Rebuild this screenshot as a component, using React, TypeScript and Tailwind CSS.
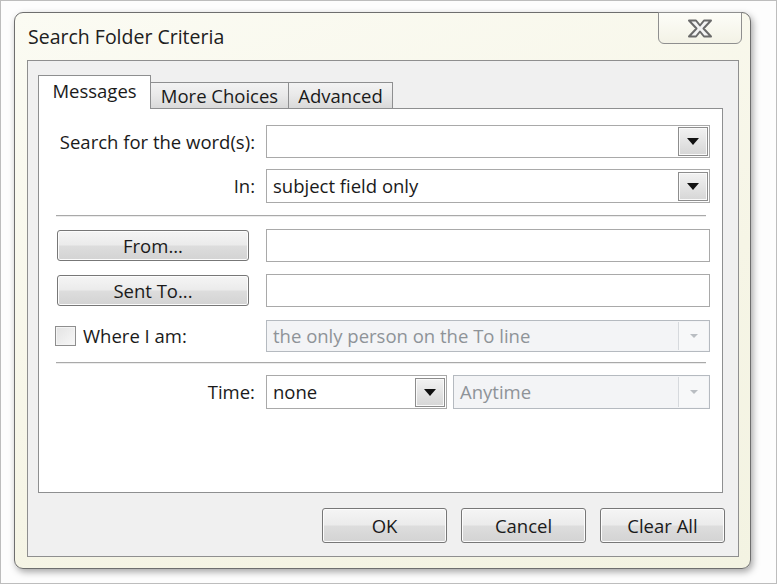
import React from "react";

const btn =
  "flex items-center justify-center rounded-[3px] border border-[#777777] bg-[linear-gradient(#f5f5f5,#ebebeb_48%,#dddddd_52%,#d3d3d3)] shadow-[inset_0_0_0_1px_#fcfcfc] text-[#1a1a1a]";

function DropButton() {
  return (
    <div className="flex h-[29px] w-[30px] items-center justify-center border border-[#8d8d8d] bg-[linear-gradient(#f2f2f2,#e4e4e4_50%,#d6d6d6)] shadow-[inset_0_0_0_1px_#fafafa]">
      <svg width="12" height="7" viewBox="0 0 12 7">
        <polygon points="0,0 12,0 6,7" fill="#111" />
      </svg>
    </div>
  );
}

function Combo({ text, className }: { text: string; className: string }) {
  return (
    <div
      className={`flex items-center border border-[#a9a9a9] bg-white pl-[6px] pr-[1px] ${className}`}
    >
      <span className="flex-1 text-[#1a1a1a]">{text}</span>
      <DropButton />
    </div>
  );
}

function DisabledCombo({ text, className }: { text: string; className: string }) {
  return (
    <div
      className={`flex items-stretch border border-[#b5bac0] bg-[#f3f4f6] ${className}`}
    >
      <span className="flex flex-1 items-center pl-[6px] text-[#8e9398]">{text}</span>
      <div className="my-[1px] mr-[1px] flex w-[30px] items-center justify-center border-l border-[#d6d9dd] bg-[#f7f8f9]">
        <svg width="10" height="6" viewBox="0 0 10 6">
          <polygon points="1,1 9,1 5,5" fill="#b9bdc2" />
        </svg>
      </div>
    </div>
  );
}

function Separator() {
  return <div className="h-[2px] w-[650px] border-t border-b border-t-[#a9a9a9] border-b-[#ececec]" />;
}

export default function App() {
  return (
    <div className="h-[584px] w-[777px] overflow-hidden border border-[#bdbdbd] bg-[#fdfdfd] pl-[13px] pt-[11px] font-['Open_Sans',sans-serif] text-[18.5px] font-medium">
      <div className="relative flex h-[557px] w-[737px] flex-col rounded-[9px] border border-[#6e6e6e] bg-[linear-gradient(160deg,#fbfbf3,#f6f5e6_60%,#f3f3e2)] shadow-[2px_3px_7px_rgba(0,0,0,0.35)]">
        {/* title bar */}
        <div className="flex h-[47px] items-center pl-[13px] text-[19.5px] font-normal text-[#202020]">
          Search Folder Criteria
        </div>
        <div className="absolute right-[8px] top-[-1px] flex h-[32px] w-[84px] items-center justify-center rounded-b-[6px] border border-[#8f8f8f] bg-[linear-gradient(#fdfdf8,#f3f2e6)]">
          <svg width="26" height="19" viewBox="0 0 26 19">
            <polygon
              points="2,1.5 9,1.5 13,6.5 17,1.5 24,1.5 16.5,9.5 24,17.5 17,17.5 13,12.5 9,17.5 2,17.5 9.5,9.5"
              fill="#f4f4f4"
              stroke="#6a6a6a"
              strokeWidth="2"
              strokeLinejoin="round"
            />
          </svg>
        </div>

        {/* client area */}
        <div className="ml-[12px] flex h-[497px] w-[712px] flex-col border border-[#8f8f8f] bg-[#f0f0f0] pl-[10px] pt-[14px]">
          {/* tabs */}
          <div className="flex h-[33px] items-end">
            <div className="relative z-10 -mb-px flex h-[34px] w-[113px] items-center justify-center border-x border-t border-[#8e8f90] bg-white pb-[4px] text-[#1a1a1a]">
              Messages
            </div>
            <div className="flex h-[26px] w-[138px] items-center justify-center border-r border-t border-[#8e8f90] bg-[linear-gradient(#f3f3f3,#e9e9e9_50%,#d9d9d9)] text-[#1a1a1a]">
              More Choices
            </div>
            <div className="flex h-[26px] w-[104px] items-center justify-center border-r border-t border-[#8e8f90] bg-[linear-gradient(#f3f3f3,#e9e9e9_50%,#d9d9d9)] text-[#1a1a1a]">
              Advanced
            </div>
          </div>

          {/* tab panel */}
          <div className="flex h-[385px] w-[685px] flex-col border border-[#8e8f90] bg-white pl-[17px] pt-[16px] text-[#1a1a1a]">
            <div className="flex h-[33px] items-center">
              <div className="w-[199px] text-right">Search for the word(s):</div>
              <Combo text="" className="ml-[11px] h-[33px] w-[444px]" />
            </div>
            <div className="mt-[11px] flex h-[34px] items-center">
              <div className="w-[199px] text-right">In:</div>
              <Combo text="subject field only" className="ml-[11px] h-[34px] w-[444px]" />
            </div>

            <div className="mt-[12px]">
              <Separator />
            </div>

            <div className="mt-[12px] flex h-[33px] items-center">
              <div className="w-[199px] pl-px">
                <div className={`${btn} h-[31px] w-[192px]`}>From...</div>
              </div>
              <div className="ml-[11px] h-[33px] w-[444px] border border-[#a9a9a9] bg-white" />
            </div>
            <div className="mt-[12px] flex h-[33px] items-center">
              <div className="w-[199px] pl-px">
                <div className={`${btn} h-[31px] w-[192px]`}>Sent To...</div>
              </div>
              <div className="ml-[11px] h-[33px] w-[444px] border border-[#a9a9a9] bg-white" />
            </div>
            <div className="mt-[13px] flex h-[32px] items-center">
              <div className="flex w-[199px] items-center">
                <div className="-ml-px h-[20px] w-[21px] border border-[#8e8e8e] bg-[linear-gradient(135deg,#e3e3e3,#f7f7f7)] shadow-[inset_0_0_0_1px_#f4f4f4]" />
                <span className="ml-[7px]">Where I am:</span>
              </div>
              <DisabledCombo
                text="the only person on the To line"
                className="ml-[11px] h-[32px] w-[444px]"
              />
            </div>

            <div className="mt-[10px]">
              <Separator />
            </div>

            <div className="mt-[11px] flex h-[34px] items-center">
              <div className="w-[199px] text-right">Time:</div>
              <Combo text="none" className="ml-[11px] h-[34px] w-[181px]" />
              <DisabledCombo text="Anytime" className="ml-[6px] h-[34px] w-[257px]" />
            </div>
          </div>

          {/* buttons */}
          <div className="mt-[15px] flex justify-end gap-[14px] pr-[13px]">
            <div className={`${btn} h-[35px] w-[125px]`}>OK</div>
            <div className={`${btn} h-[35px] w-[125px]`}>Cancel</div>
            <div className={`${btn} h-[35px] w-[125px]`}>Clear All</div>
          </div>
        </div>
      </div>
    </div>
  );
}
